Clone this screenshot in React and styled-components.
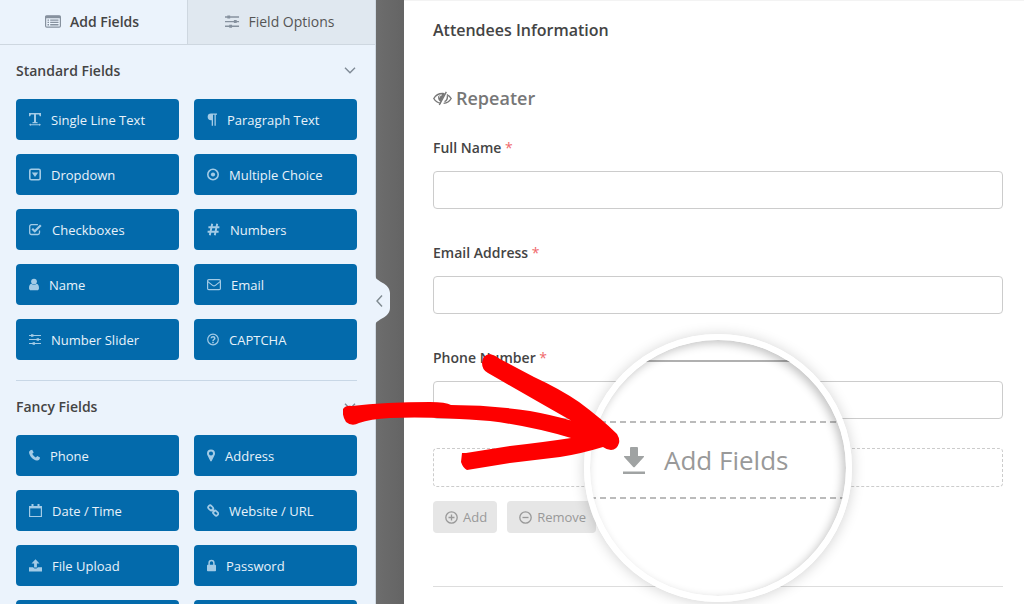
import React from "react";
import styled, { createGlobalStyle } from "styled-components";

const GlobalStyle = createGlobalStyle`
  *, *::before, *::after { box-sizing: border-box; }
  body {
    margin: 0;
    background: #fff;
    color: #444;
    font-family: "Open Sans", "Noto Sans", sans-serif;
  }
  button, input { font: inherit; color: inherit; }
`;

const Page = styled.div`
  display: flex;
  height: 100vh;
  overflow: hidden;
`;

const Sidebar = styled.aside`
  position: relative;
  z-index: 1;
  flex: 0 0 376px;
  background: #ebf3fc;
  border-right: 1px solid #cfd9e3;
`;

const Gutter = styled.div`
  flex: 0 0 28px;
  background: linear-gradient(to right, #6d6d6d, #646464);
`;

const Tabs = styled.nav`
  display: flex;
  height: 45px;
`;

const Tab = styled.button`
  display: flex;
  flex: 1;
  align-items: center;
  justify-content: center;
  gap: 9px;
  padding: 0 3px 1px 0;
  border: 0;
  border-bottom: 1px solid #ced7e0;
  border-left: ${(p) => (p.$active ? "0" : "1px solid #ced7e0")};
  background: ${(p) => (p.$active ? "#ebf3fc" : "#e0e8f0")};
  color: ${(p) => (p.$active ? "#444" : "#555")};
  font-size: 14px;
  font-weight: ${(p) => (p.$active ? 600 : 400)};
  svg { color: #86919e; }
`;

const Group = styled.section`
  margin: 0 18px 0 16px;
  padding-bottom: 20px;
  border-bottom: 1px solid #c8d7e6;
`;

const GroupHeader = styled.button`
  display: flex;
  align-items: center;
  justify-content: space-between;
  width: 100%;
  height: 54px;
  padding: 0 1px 3px 0;
  border: 0;
  background: none;
  font-size: 14px;
  font-weight: 600;
  svg { color: #7f8a96; }
`;

const FieldGrid = styled.div`
  display: grid;
  grid-template-columns: 1fr 1fr;
  grid-auto-rows: 41px;
  gap: 14px 15px;
`;

const FieldButton = styled.button`
  display: flex;
  align-items: center;
  gap: 10px;
  padding: 0 13px;
  border: 0;
  border-radius: 4px;
  background: #036aab;
  color: #e8f2fa;
  font-size: 13px;
  white-space: nowrap;
  svg { color: #a3cbe6; }
`;

const Collapse = styled.button`
  position: absolute;
  top: 276px;
  left: 100%;
  width: 15px;
  height: 49px;
  padding: 0;
  border: 0;
  background: none;
  svg { display: block; overflow: visible; }
`;

const Main = styled.main`
  flex: 1;
  min-width: 0;
  padding: 18px 21px 0 29px;
  background: #fff;
  border-top: 1px solid #f3f3f3;
`;

const FormTitle = styled.h2`
  margin: 0 0 44px;
  font-size: 16px;
  line-height: 22px;
  font-weight: 600;
`;

const RepeaterTitle = styled.h3`
  display: flex;
  align-items: center;
  gap: 4px;
  margin: 0 0 27px;
  color: #777;
  font-size: 18px;
  line-height: 26px;
  font-weight: 600;
`;

const Field = styled.div`
  display: flex;
  flex-direction: column;
  gap: 13px;
  margin-bottom: 34px;
`;

const Label = styled.label`
  font-size: 14px;
  line-height: 20px;
  font-weight: 600;
`;

const Required = styled.span`
  color: #f0686b;
  font-weight: 400;
`;

const Input = styled.input`
  width: 100%;
  height: 38px;
  padding: 0 10px;
  border: 1px solid #ccc;
  border-radius: 4px;
  background: #fff;
`;

const DropZone = styled.div`
  position: relative;
  height: 39px;
  margin-top: -5px;
  border: 1px dashed #ccc;
  border-radius: 4px;
`;

const Actions = styled.div`
  display: flex;
  gap: 10px;
  margin-top: 14px;
  padding-bottom: 53px;
  border-bottom: 1px solid #ddd;
`;

const ActionButton = styled.button`
  display: flex;
  align-items: center;
  gap: 5px;
  height: 32px;
  padding: 0 10px 0 12px;
  border: 0;
  border-radius: 4px;
  background: #e6e6e6;
  color: #999;
  font-size: 13px;
`;

const Callout = styled.div`
  position: absolute;
  top: 50%;
  left: 50%;
  z-index: 2;
  width: 268px;
  height: 268px;
  transform: translate(-50%, -50%);
`;

const Lens = styled.div`
  position: relative;
  height: 100%;
  padding-top: 20px;
  overflow: hidden;
  border: 6px solid #fff;
  border-radius: 50%;
  background: #fff;
`;

const LensShade = styled.div`
  position: absolute;
  inset: 0;
  border-radius: 50%;
  box-shadow: inset -3px 3px 10px rgba(0, 0, 0, 0.24);
`;

const LensShadow = styled.div`
  position: absolute;
  inset: 0;
  border-radius: 50%;
  box-shadow: 0 1px 14px rgba(0, 0, 0, 0.18);
`;

const LensField = styled.div`
  height: 61px;
  border-top: 2px solid #b0b0b0;
`;

const LensZone = styled.div`
  display: flex;
  align-items: center;
  gap: 19px;
  height: 78px;
  padding: 0 0 0 33px;
  border-top: 2px dashed #bbb;
  border-bottom: 2px dashed #bbb;
  color: #999;
  font-size: 26px;
  white-space: nowrap;
`;

const Arrow = styled.svg`
  position: absolute;
  top: 19px;
  left: -241px;
  width: 279px;
  height: 118px;
  fill: #fe0000;
`;

const line = { fill: "none", stroke: "currentColor", strokeWidth: 1.3 };

const SHAPES = {
  text: [12, <>
    <path d="M0 0h12v3.2h-1.2L10 1.6H7V9l1.6.3v.9H3.4v-.9L5 9V1.6H2L1.200 3.200H0z" />
    <path d="M0 11.700l1.800-1.300v.8h8.400v-.8l1.800 1.300-1.800 1.300v-.8H1.800v.8z" />
  </>],
  paragraph: [10, <path d="M4 .5h6v1.200H8.800v11H7.500v-11H6v11H4.700V7.200H4A3.350 3.350 0 0 1 4 .5z" />],
  dropdown: [12, <>
    <rect x=".8" y="1.200" width="10.400" height="10.600" rx="1.500" {...line} strokeWidth="1.600" />
    <path d="M2.800 4.600h6.400L6 8.900z" />
  </>],
  radio: [12, <>
    <circle cx="6" cy="6.500" r="5.200" {...line} strokeWidth="1.600" />
    <circle cx="6" cy="6.500" r="2.100" />
  </>],
  check: [13, <>
    <path d="M10.500 7.500v2.300a1.700 1.700 0 0 1-1.700 1.700H2.400A1.700 1.700 0 0 1 .7 9.800V3.400a1.700 1.700 0 0 1 1.700-1.700h6.500" {...line} />
    <path d="M3.200 5.700l2.600 2.600 6-6" {...line} strokeWidth="2.200" />
  </>],
  hash: [13, <path d="M5.200 .8L2.800 12.200M10.200 .8L7.800 12.200M1.400 4.300h11M.6 8.700h11" {...line} strokeWidth="1.900" />],
  user: [10, <>
    <circle cx="5" cy="3.600" r="2.900" />
    <path d="M2.300 5.800C3.700 7.300 6.300 7.300 7.700 5.800 9.300 6 10 7.800 10 10.200c0 1.200-.8 2.100-1.900 2.100H1.900C.8 12.300 0 11.400 0 10.200 0 7.800.7 6 2.300 5.800z" />
  </>],
  envelope: [14, <>
    <rect x=".6" y="1.600" width="12.800" height="10" rx="1.200" {...line} strokeWidth="1.200" />
    <path d="M.9 3.600l4.700 3.800c.9.700 1.900.7 2.800 0l4.700-3.800" {...line} strokeWidth="1.200" />
  </>],
  sliders: [12, <>
    <path d="M0 2.500h12M0 6.500h12M0 10.500h12" {...line} strokeWidth="1.200" />
    <path d="M2 1.200h2.400v2.600H2zM7.600 5.200H10v2.600H7.600zM3.600 9.200H6v2.600H3.600z" />
  </>],
  question: [12, <>
    <circle cx="6" cy="6.500" r="5.300" {...line} strokeWidth="1.200" />
    <path d="M4.200 5.300c.2-2 3.600-2 3.600 0C7.800 6.500 6 6.500 6 7.900" {...line} strokeWidth="1.500" />
    <path d="M5.200 8.700h1.600v1.500H5.200z" />
  </>],
  phone: [11, <path d="M2.200 1.100l1-.4 1.500 2.700-1.400 1.400c.7 1.600 1.900 2.800 3.500 3.600l1.500-1.400L11 8.500c.1 2-1.500 3.300-3.200 3C3.800 10.600.9 7.600.1 3.900-.1 2.500.9 1.500 2.200 1.100z" />],
  pin: [8, <path fillRule="evenodd" d="M4 .5a4 4 0 0 1 4 4c0 1-.3 1.500-.7 2.300L4.700 12.100a.8.8 0 0 1-1.400 0L.7 6.800C.3 6 0 5.500 0 4.500a4 4 0 0 1 4-4zM4 2.400a2.050 2.050 0 1 0 0 4.100 2.050 2.050 0 0 0 0-4.100z" />],
  calendar: [13, <>
    <path d="M.6 2.500h11.800v10H.6z" {...line} strokeWidth="1.200" />
    <path d="M.6 2h11.800v2.400H.6z" />
    <path d="M2.500 0h2v3.200h-2zM8.500 0h2v3.200h-2z" />
  </>],
  link: [12, <g {...line} strokeWidth="1.700">
    <rect x="1" y="2" width="5.400" height="3.800" rx="1.700" transform="rotate(45 3.700 3.900)" />
    <rect x="5.900" y="7.200" width="5.400" height="3.800" rx="1.700" transform="rotate(45 8.600 9.100)" />
    <path d="M4.700 4.900l3 3.200" />
  </g>],
  upload: [13, <>
    <path d="M6.500 .3l4 4.300H7.900v3.900H5.100V4.600H2.500z" />
    <path d="M0 8.300h4.300c.3 1.700 4.100 1.700 4.400 0H13v4.200H0z" />
  </>],
  lock: [9, <>
    <path d="M2.100 6V3.900c0-3.200 4.800-3.200 4.800 0V6" {...line} strokeWidth="1.500" />
    <rect y="5.700" width="9" height="6.500" rx=".8" />
  </>],
};

const Icon = ({ name, scale = 1 }) => {
  const [width, shape] = SHAPES[name];
  return (
    <svg width={width * scale} height={13 * scale} viewBox={`0 0 ${width} 13`} fill="currentColor" aria-hidden="true">
      {shape}
    </svg>
  );
};

const ListIcon = () => (
  <svg width="16" height="13" viewBox="0 0 16 13" fill="currentColor" aria-hidden="true">
    <rect x=".6" y=".8" width="14.800" height="11.400" rx="1.200" fill="none" stroke="currentColor" strokeWidth="1.200" />
    <path d="M.6 .8h14.800v2.400H.6zM2.500 4.500H4v1.300H2.500zM2.500 6.800H4v1.300H2.500zM2.500 9.100H4v1.300H2.500zM5.200 4.500h8.300v1.300H5.200zM5.200 6.800h8.300v1.300H5.200zM5.200 9.100h8.300v1.300H5.200z" />
  </svg>
);

const Chevron = () => (
  <svg width="12" height="7" viewBox="0 0 12 7" fill="none" stroke="currentColor" strokeWidth="1.400" aria-hidden="true">
    <path d="M1 .8l5 5 5-5" />
  </svg>
);

const EyeSlash = () => (
  <svg width="19" height="15" viewBox="0 0 19 15" fill="none" stroke="currentColor" strokeWidth="1.400" aria-hidden="true">
    <path d="M8 12.300C4.500 11.800 2.100 9.800.8 7.500 2.700 4.200 5.800 2.500 9.500 2.500l2 .3" />
    <path d="M13.800 3.600c1.900.9 3.400 2.200 4.400 3.900-1.700 2.900-4.300 4.600-7.600 4.900" />
    <path d="M13.300 .8L6.300 14" />
    <path d="M9.500 2.500L5 5.500c0 2.800.9 4.500 2.700 5.500l4-8z" fill="currentColor" stroke="none" />
    <path d="M14.300 5.200c.4 2.600-.7 4.500-2.800 5.400" />
    <path d="M6.500 6.400c0-1.300.9-2.300 2.300-2.500" stroke="#fff" strokeWidth="1" />
  </svg>
);

const CircleSign = ({ plus }) => (
  <svg width="13" height="13" viewBox="0 0 13 13" fill="none" stroke="currentColor" strokeWidth="1.300" aria-hidden="true">
    <circle cx="6.500" cy="6.500" r="5.700" />
    <path d={plus ? "M3.500 6.500h6M6.500 3.500v6" : "M3.500 6.500h6"} />
  </svg>
);

const DownloadIcon = () => (
  <svg width="22" height="28" viewBox="0 0 22 28" fill="#a0a3a3" aria-hidden="true">
    <path d="M8 1h6q1 0 1 1v8h5.500q1 .2.400 1L12 20.800q-1 1-2 0L1.100 11q-.6-.8.400-1H7V2q0-1 1-1zM0 25.500h22V28H0z" />
  </svg>
);

const GROUPS = [
  { title: "Standard Fields", fields: [
    ["text", "Single Line Text"], ["paragraph", "Paragraph Text"],
    ["dropdown", "Dropdown"], ["radio", "Multiple Choice"],
    ["check", "Checkboxes"], ["hash", "Numbers"],
    ["user", "Name"], ["envelope", "Email"],
    ["sliders", "Number Slider"], ["question", "CAPTCHA"],
  ] },
  { title: "Fancy Fields", fields: [
    ["phone", "Phone"], ["pin", "Address"],
    ["calendar", "Date / Time"], ["link", "Website / URL"],
    ["upload", "File Upload"], ["lock", "Password"],
    [null, ""], [null, ""],
  ] },
];

const FORM_FIELDS = [
  ["full-name", "Full Name"],
  ["email", "Email Address"],
  ["phone", "Phone Number"],
];

export default function App() {
  return (
    <>
      <GlobalStyle />
      <Page>
        <Sidebar>
          <Tabs>
            <Tab type="button" $active><ListIcon />Add Fields</Tab>
            <Tab type="button"><Icon name="sliders" scale={1.17} />Field Options</Tab>
          </Tabs>
          {GROUPS.map((group) => (
            <Group key={group.title}>
              <GroupHeader type="button">{group.title}<Chevron /></GroupHeader>
              <FieldGrid>
                {group.fields.map(([icon, label], i) => (
                  <FieldButton type="button" key={i}>
                    {icon && <Icon name={icon} />}
                    {label}
                  </FieldButton>
                ))}
              </FieldGrid>
            </Group>
          ))}
          <Collapse type="button" aria-expanded="true">
            <svg width="15" height="49" viewBox="0 0 15 49" fill="none" aria-hidden="true">
              <path d="M-1 0h1c1 6 15 7 15 17v15c0 10-14 11-15 17h-1z" fill="#ebf3fc" />
              <path d="M7 19.500l-5 5.500 5 5.500" stroke="#7f8a90" strokeWidth="1.400" />
            </svg>
          </Collapse>
        </Sidebar>
        <Gutter />
        <Main>
          <FormTitle>Attendees Information</FormTitle>
          <RepeaterTitle><EyeSlash />Repeater</RepeaterTitle>
          {FORM_FIELDS.map(([id, label]) => (
            <Field key={id}>
              <Label htmlFor={id}>{label} <Required>*</Required></Label>
              <Input id={id} type="text" />
            </Field>
          ))}
          <DropZone>
            <Callout>
              <LensShadow />
              <Lens>
                <LensField />
                <LensZone><DownloadIcon />Add Fields</LensZone>
                <LensShade />
              </Lens>
              <Arrow viewBox="343 353 279 118" aria-hidden="true">
                <path d="M343 409Q346 405 352 406Q385 402 430 402Q446 402 451 405Q490 405 530 411Q552 415 571 420.500Q535 400 488 373Q482 370 482 363Q482 355 490 354Q495 355 500 359L534 377Q560 389 579 402Q602 419 617 434Q620 439 619 443Q617 450 611 450Q607 450 603 447Q580 454 560 457L510 463L467 470Q463 468 461 462L462 453L466 453L510 446Q545 442 571 438Q530 426 490 421Q430 416 390 418Q370 419 359 423Q352 427 346 422Q342 416 343 409Z" />
              </Arrow>
            </Callout>
          </DropZone>
          <Actions>
            <ActionButton type="button"><CircleSign plus />Add</ActionButton>
            <ActionButton type="button"><CircleSign />Remove</ActionButton>
          </Actions>
        </Main>
      </Page>
    </>
  );
}
